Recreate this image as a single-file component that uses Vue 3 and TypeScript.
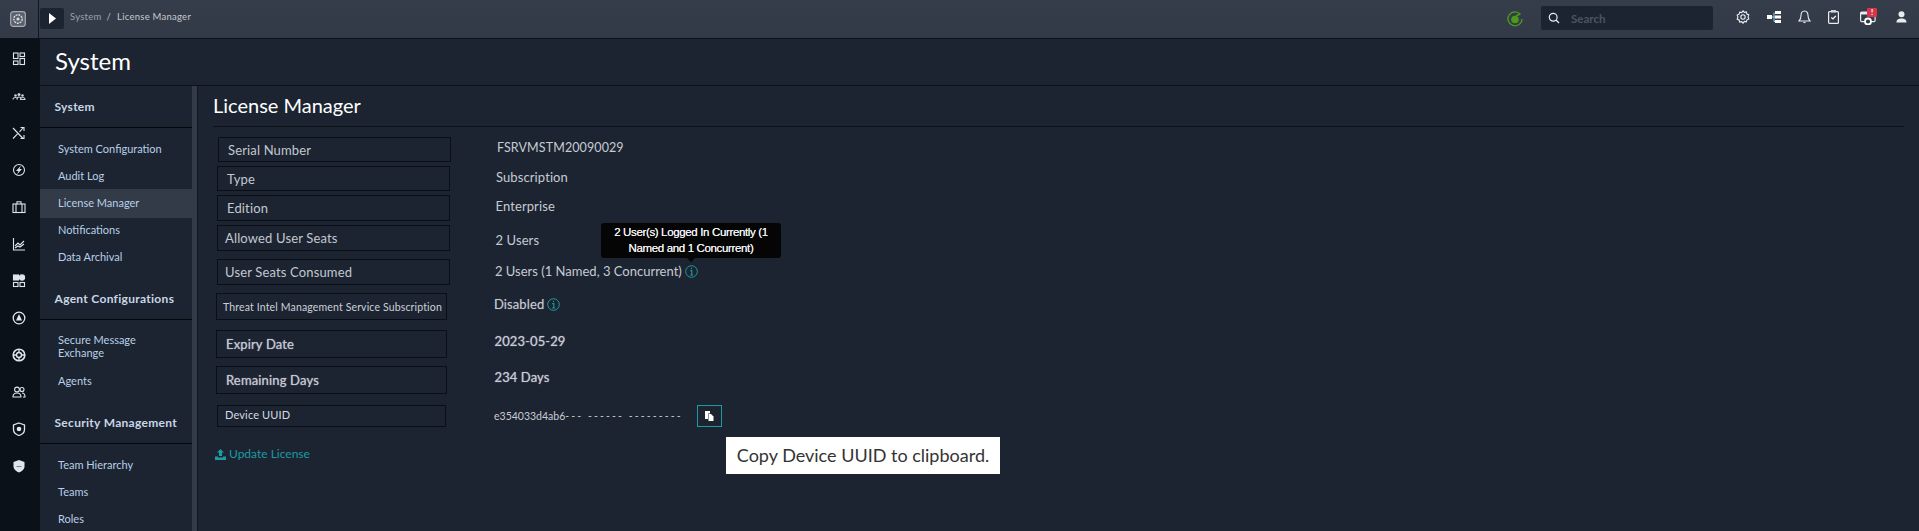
<script setup lang="ts">
interface Section { title: string; items: string[] }
interface Row { key: string; label: string; value: string; info?: boolean }

const sections: Section[] = [
  { title: 'System', items: ['System Configuration', 'Audit Log', 'License Manager', 'Notifications', 'Data Archival'] },
  { title: 'Agent Configurations', items: ['Secure Message Exchange', 'Agents'] },
  { title: 'Security Management', items: ['Team Hierarchy', 'Teams', 'Roles'] },
]

const rows: Row[] = [
  { key: 'serial', label: 'Serial Number', value: 'FSRVMSTM20090029' },
  { key: 'type', label: 'Type', value: 'Subscription' },
  { key: 'edition', label: 'Edition', value: 'Enterprise' },
  { key: 'allowed', label: 'Allowed User Seats', value: '2 Users' },
  { key: 'consumed', label: 'User Seats Consumed', value: '2 Users (1 Named, 3 Concurrent)', info: true },
  { key: 'threat', label: 'Threat Intel Management Service Subscription', value: 'Disabled', info: true },
  { key: 'expiry', label: 'Expiry Date', value: '2023-05-29' },
  { key: 'remaining', label: 'Remaining Days', value: '234 Days' },
]

const railCount = 12
</script>

<template>
  <div class="page">
    <header class="topbar">
      <div class="brand">
        <svg width="16" height="16" viewBox="0 0 16 16">
          <rect x="0.7" y="0.7" width="14.6" height="14.6" rx="2.5" fill="#59606c" stroke="#a9adb4" stroke-width="1.2" />
          <circle cx="8" cy="8" r="4.2" fill="none" stroke="#d6d9dd" stroke-width="1.4" stroke-dasharray="2 0.8" />
          <circle cx="8" cy="8" r="1.6" fill="#d6d9dd" />
        </svg>
      </div>
      <button class="toggle" type="button">
        <svg width="7" height="11" viewBox="0 0 7 11"><path d="M0 0 L7 5.5 L0 11 Z" fill="#fff" /></svg>
      </button>
      <div class="crumbs"><span class="crumb-root">System</span><span class="crumb-sep">/</span><span class="crumb-leaf">License Manager</span></div>
      <div class="tools">
        <svg class="status" width="16" height="16" viewBox="0 0 16 16">
          <path d="M13.5 3.5A7 7 0 1 0 15 8" fill="none" stroke="#4c9a1c" stroke-width="1.3" />
          <circle cx="8" cy="8.5" r="3.8" fill="#4c9a1c" />
          <path d="M9 5 L13 3" stroke="#4c9a1c" stroke-width="1.5" />
        </svg>
        <div class="search">
          <svg width="12" height="12" viewBox="0 0 12 12"><circle cx="5.2" cy="5.2" r="3.9" fill="none" stroke="#e8ebef" stroke-width="1.2" /><path d="M8 8 L11 11" stroke="#e8ebef" stroke-width="1.2" /></svg>
          <span>Search</span>
        </div>
        <div class="tool-icons">
          <svg width="14" height="14" viewBox="0 0 14 14"><path d="M7 .8l1.3 1.6 2-.4.6 2 1.9.9-.7 2 .7 2-1.9.9-.6 2-2-.4L7 13.2l-1.3-1.6-2 .4-.6-2-1.9-.9.7-2-.7-2 1.9-.9.6-2 2 .4z" fill="none" stroke="#eef1f5" stroke-width="1.1" /><circle cx="7" cy="7" r="2.2" fill="none" stroke="#eef1f5" stroke-width="1.1" /></svg>
          <svg width="14" height="12" viewBox="0 0 14 12"><rect x="0" y="4" width="5" height="4" fill="#fff" /><rect x="8" y="0" width="6" height="3" fill="#fff" /><rect x="8" y="4.5" width="6" height="3" fill="#fff" /><rect x="8" y="9" width="6" height="3" fill="#fff" /><path d="M5 6H8M7 1.5V10.5H8" stroke="#8fd0f0" fill="none" /></svg>
          <svg width="13" height="14" viewBox="0 0 13 14"><path d="M6.5 1C4 1 3 3 3 5.500C3 8 2.500 9.500 1 11H12C10.500 9.500 10 8 10 5.500C10 3 9 1 6.500 1Z" fill="none" stroke="#e8ebef" stroke-width="1.1" /><path d="M5.500 12.500H7.500" stroke="#e8ebef" stroke-width="1.2" /></svg>
          <svg width="11" height="14" viewBox="0 0 11 14"><rect x="0.600" y="1.600" width="9.800" height="11.800" rx="1" fill="none" stroke="#e8ebef" stroke-width="1.200" /><rect x="3" y="0" width="5" height="2.500" fill="#d0d4d9" /><path d="M3.300 7.500L5 9L7.800 5.800" fill="none" stroke="#fff" stroke-width="1.200" /></svg>
          <span class="jobs">
            <svg width="16" height="14" viewBox="0 0 16 14"><rect x="0.600" y="1.100" width="14.500" height="9.500" rx="1" fill="none" stroke="#e8ebef" stroke-width="1.200" /><rect x="1" y="1" width="14" height="2.500" fill="#e8ebef" /><circle cx="8" cy="10.500" r="3" fill="#333a48" stroke="#fff" stroke-width="1.800" /></svg>
            <b class="badge">!</b>
          </span>
          <svg width="11" height="12" viewBox="0 0 11 12"><circle cx="5.500" cy="3.200" r="3" fill="#e8ebef" /><path d="M0.500 11.500C0.500 8.500 2.500 8 4 7.500H7C8.500 8 10.500 8.500 10.500 11.500Z" fill="#e8ebef" /></svg>
        </div>
      </div>
    </header>

    <div class="body">
      <nav class="rail">
        <span v-for="n in railCount" :key="n" class="rail-item">
          <svg width="14" height="14" viewBox="0 0 14 14" fill="none" stroke="#dfe5ee" stroke-width="1.100">
            <template v-if="n === 1"><rect x="1.500" y="1" width="4.500" height="5.500" /><rect x="8" y="1" width="4.500" height="3.500" /><rect x="1.500" y="9" width="4.500" height="3.500" /><rect x="8" y="6.500" width="4.500" height="6" /></template>
            <template v-else-if="n === 2"><circle cx="3.500" cy="6.500" r="1.300" fill="#c9d0da" stroke="none" /><circle cx="10.500" cy="6.500" r="1.300" fill="#c9d0da" stroke="none" /><circle cx="7" cy="5.500" r="1.500" fill="#c9d0da" stroke="none" /><path d="M1 10.500C1 9 2 8.500 3.500 8.500S5.500 9 5.500 10.500M5 10.500C5 8.500 6 8 7 8S9 8.500 9 10.500M8.500 10.500C8.500 9 9.500 8.500 10.500 8.500S13 9 13 10.500Z" stroke="#c9d0da" /></template>
            <template v-else-if="n === 3"><path d="M1 2L11 12.500M1 12.500L5.500 7.800M7.500 5.800L11 2M8.500 1.500H12V5M8.500 12.500H12V9" /></template>
            <template v-else-if="n === 4"><circle cx="7" cy="7" r="5.500" /><path d="M9 2.500L4 8H6.500L5 11.500L10 6H7.500Z" fill="#dfe5ee" stroke="none" /></template>
            <template v-else-if="n === 5"><rect x="1" y="4" width="12" height="8.500" /><path d="M5 4V1.800H9V4M4 4V12.500M10 4V12.500" /></template>
            <template v-else-if="n === 6"><path d="M1.500 1V13H13M3 9L6 6L8 8L12 4M3 11L6 9L8 10L12 7" /></template>
            <template v-else-if="n === 7"><rect x="1.500" y="1" width="5" height="5" fill="#dfe5ee" /><circle cx="10" cy="3.500" r="2.600" fill="#dfe5ee" /><rect x="1.500" y="8.500" width="4.500" height="4" /><rect x="8" y="8.500" width="4.500" height="4" /></template>
            <template v-else-if="n === 8"><circle cx="7" cy="7" r="5.800" stroke-width="1.300" /><path d="M7 3L10 9.500H4Z" fill="#dfe5ee" stroke="none" /></template>
            <template v-else-if="n === 9"><circle cx="7" cy="7" r="5.800" stroke-width="1.600" /><circle cx="7" cy="7" r="2.500" stroke-width="1.400" /><path d="M7 1V4.500M7 9.500V13M1 7H4.500M9.500 7H13" stroke-width="1.300" /></template>
            <template v-else-if="n === 10"><circle cx="5" cy="4.500" r="2.400" /><circle cx="10" cy="4.500" r="2" /><path d="M1 12C1 9 3 8 5 8S9 9 9 12ZM10 8C12 8 13 9.500 13 12H11" /></template>
            <template v-else-if="n === 11"><path d="M7 1L12.500 3V7.500C12.500 10 10 12.500 7 13.500C4 12.500 1.500 10 1.500 7.500V3Z" stroke-width="1.300" /><circle cx="7" cy="7" r="2.300" fill="#dfe5ee" stroke="none" /></template>
            <template v-else><path d="M7 1L12.500 3V7.500C12.500 10 10 12.500 7 13.500C4 12.500 1.500 10 1.500 7.500V3Z" fill="#dfe5ee" stroke="none" /><path d="M4.500 7.500H9.500" stroke="#7a8a9c" /></template>
          </svg>
        </span>
      </nav>

      <div class="main">
        <div class="page-title">System</div>
        <div class="split">
          <aside class="sidebar">
            <section v-for="s in sections" :key="s.title" class="side-section">
              <h4 class="side-head">{{ s.title }}</h4>
              <ul class="side-list">
                <li v-for="item in s.items" :key="item" class="side-item" :class="{ active: item === 'License Manager', tall: item === 'Secure Message Exchange' }">
                  <span>{{ item }}</span>
                </li>
              </ul>
            </section>
          </aside>
          <div class="scrollbar"></div>
          <main class="content">
            <h2 class="content-title">License Manager</h2>
            <div class="rows">
              <div v-for="r in rows" :key="r.key" class="row" :class="`row-${r.key}`">
                <div class="label">{{ r.label }}</div>
                <div class="value">
                  <span>{{ r.value }}</span>
                  <svg v-if="r.info" class="info" width="13" height="13" viewBox="0 0 13 13" fill="none" stroke="#1e9aa2"><circle cx="6.500" cy="6.500" r="5.800" /><path d="M5.200 5.600H6.800V10M5.200 10H8.200M6.500 2.800V4" stroke-width="1.100" /></svg>
                  <div v-if="r.key === 'consumed'" class="hint">
                    2 User(s) Logged In Currently (1<br />Named and 1 Concurrent)
                  </div>
                </div>
              </div>
              <div class="row row-device">
                <div class="label">Device UUID</div>
                <div class="uuid">e354033d4ab6<span class="dashes">--- ------ ---------</span></div>
                <div class="copy-wrap">
                  <button class="copy" type="button">
                    <svg width="9" height="10" viewBox="0 0 9 10"><path d="M0 0H5V2.500H3V8H0Z" fill="#fff" /><path d="M3.500 3H6L8.500 5.500V10H3.500Z" fill="#fff" /></svg>
                  </button>
                  <div class="copy-tip">Copy Device UUID to clipboard.</div>
                </div>
              </div>
            </div>
            <a class="update">
              <svg width="11" height="11" viewBox="0 0 11 11"><path d="M5.500 0L9 3.500H7V7H4V3.500H2Z" fill="#1e9aa2" /><path d="M0 7.500H3V8.500H8V7.500H11V11H0Z" fill="#1e9aa2" /></svg>
              Update License
            </a>
          </main>
        </div>
      </div>
    </div>
  </div>
</template>

<style>
html, body { margin: 0; background: #1c2431; overflow: hidden; }
</style>

<style scoped>
.page {
  width: 1919px;
  height: 531px;
  overflow: hidden;
  display: flex;
  flex-direction: column;
  background: #1c2431;
  font-family: Lato, "Open Sans", sans-serif;
  color: #c9ced6;
}
.topbar {
  height: 39px;
  flex: none;
  display: flex;
  align-items: flex-start;
  background: linear-gradient(#353c4a, #323947);
  border-bottom: 1px solid #0d1118;
  box-sizing: border-box;
}
.brand {
  width: 39px;
  height: 38px;
  box-sizing: border-box;
  border-right: 1px solid #12161d;
  display: flex;
  align-items: center;
  justify-content: center;
  padding-right: 2px;
}
.toggle {
  width: 24px;
  height: 21px;
  margin: 8px 0 0 1px;
  padding: 0;
  border: 0;
  border-radius: 2px;
  background: #1c2431;
  display: flex;
  align-items: center;
  justify-content: center;
}
.crumbs { margin: 10px 0 0 6px; font-size: 9.500px; line-height: 14px; letter-spacing: .25px; }
.crumb-root { color: #98a2b3; }
.crumb-sep { margin: 0 6px 0 5px; color: #b8bec8; }
.crumb-leaf { color: #c5c9cf; }
.tools { margin-left: auto; display: flex; align-items: center; height: 38px; }
.status { margin-right: 18px; }
.search {
  width: 172px;
  height: 24px;
  background: #1c2431;
  border-radius: 2px;
  display: flex;
  align-items: center;
  gap: 11px;
  padding-left: 7px;
  box-sizing: border-box;
  font-size: 11.500px;
  font-weight: 700;
  color: #4d5460;
  margin-top: -2px;
}
.tool-icons {
  display: flex;
  align-items: center;
  width: 206px;
  padding-left: 23px;
  box-sizing: border-box;
  gap: 17px;
  margin-top: -4px;
}
.jobs { position: relative; display: flex; margin: 2px 3px 0 4px; }
.badge {
  position: absolute;
  left: 7px;
  top: -3px;
  width: 10px;
  height: 9px;
  background: #d8344a;
  color: #fff;
  font-size: 8px;
  line-height: 9px;
  text-align: center;
  border-radius: 1px;
}
.body { flex: 1; min-height: 0; display: flex; }
.rail { width: 40px; flex: none; background: #0b1118; display: flex; flex-direction: column; padding-top: 1.500px; box-sizing: border-box; }
.rail-item { height: 37px; flex: none; display: flex; align-items: center; justify-content: center; padding-right: 3px; }
.main { flex: 1; min-width: 0; display: flex; flex-direction: column; }
.page-title {
  height: 47px;
  flex: none;
  box-sizing: border-box;
  border-bottom: 1px solid #0d1118;
  padding: 0 0 0 15px;
  font-size: 24px;
  line-height: 44px;
  color: #fff;
}
.split { flex: 1; min-height: 0; display: flex; overflow: hidden; }
.sidebar { width: 152px; flex: none; }
.side-section { margin-bottom: 8px; }
.side-head {
  margin: 0;
  height: 42px;
  box-sizing: border-box;
  border-bottom: 1px solid #05080c;
  padding: 13px 0 0 14.500px;
  font-size: 12px;
  line-height: 16px;
  font-weight: 700;
  color: #c8d6e6;
  letter-spacing: .3px;
}
.side-list { list-style: none; margin: 0; padding: 6.500px 0 0; }
.side-item {
  height: 27px;
  box-sizing: border-box;
  padding: 7px 0 0 18px;
  font-size: 11px;
  line-height: 13px;
  color: #b9d0e8;
  letter-spacing: 0;
}
.side-item.active { height: 29px; margin-bottom: -2px; background: #333a48; position: relative; }
.side-item.tall { height: 41px; padding-right: 30px; }
.scrollbar { width: 5px; flex: none; background: #333a48; }
.content { flex: 1; min-width: 0; border-left: 1px solid #12161d; padding: 0 15px 0 15px; }
.content-title {
  margin: 0;
  height: 41px;
  box-sizing: border-box;
  border-bottom: 1px solid #0d1118;
  font-size: 20px;
  line-height: 39px;
  font-weight: 400;
  color: #fff;
}
.rows { padding-top: 10px; margin-left: 4px; }
.row { display: flex; align-items: flex-start; }
.label {
  flex: none;
  width: 233px;
  height: 100%;
  box-sizing: border-box;
  border: 1px solid #0b0f15;
  font-size: 13px;
  padding-left: 9px;
  display: flex;
  align-items: center;
  color: #c3c8d0;
  letter-spacing: .15px;
  white-space: nowrap;
}
.value { position: relative; display: flex; align-items: center; gap: 3px; margin-left: 46px; font-size: 13px; line-height: 16px; color: #c6cbd3; letter-spacing: .1px; }
.info { flex: none; }
.row-serial { height: 25px; margin-left: 1px; margin-bottom: 4px; }
.row-serial .value { margin-top: 3px; font-size: 12.500px; letter-spacing: .1px; }
.row-type { height: 25px; margin-bottom: 4px; }
.row-type .value { margin-top: 3px; }
.row-edition { height: 26px; margin-bottom: 4px; }
.row-edition .value { margin-top: 3px; margin-left: 45.500px; }
.row-allowed { height: 26px; margin-bottom: 8px; }
.row-allowed .label { padding-left: 7px; }
.row-allowed .value { margin-top: 7px; margin-left: 45.500px; }
.row-consumed { height: 26px; margin-bottom: 8px; }
.row-consumed .label { padding-left: 7px; }
.row-consumed .value { margin-top: 4px; margin-left: 45px; letter-spacing: 0; }
.row-threat { height: 27px; margin-bottom: 10px; margin-left: -1px; }
.row-threat .label { width: 231px; font-size: 10.500px; padding-left: 6px; letter-spacing: .15px; color: #ccd1d8; }
.row-threat .value { margin-top: 3px; margin-left: 47px; text-shadow: 0 0 1px #667; }
.row-expiry, .row-remaining { height: 28px; margin-left: -1px; }
.row-expiry { margin-bottom: 8px; }
.row-remaining { margin-bottom: 11px; }
.row-expiry .label, .row-remaining .label { width: 231px; padding-left: 9px; text-shadow: 0 0 1px #aab; }
.row-expiry .value, .row-remaining .value { margin-top: 3px; margin-left: 47.500px; text-shadow: 0 0 1px #aab; }
.row-device { height: 22px; }
.row-device .label { margin-left: 0; width: 229px; font-size: 11px; padding: 0 0 4px 7px; color: #d6dae0; }
.uuid { margin: 3px 0 0 48px; width: 203px; font-size: 10.500px; line-height: 16px; color: #c6cbd3; white-space: nowrap; }
.dashes { letter-spacing: 2.100px; }
.copy-wrap { position: relative; }
.copy {
  width: 25px;
  height: 22px;
  padding: 0;
  background: transparent;
  border: 1px solid #1e9aa2;
  display: flex;
  align-items: center;
  justify-content: center;
}
.copy-tip {
  position: absolute;
  left: 29px;
  top: 32px;
  width: 274px;
  height: 37px;
  background: #fff;
  color: #333;
  font-size: 18px;
  line-height: 37px;
  text-align: center;
  white-space: nowrap;
}
.hint {
  position: absolute;
  left: 106px;
  top: -40px;
  width: 180px;
  height: 35px;
  background: #050506;
  border-radius: 3px;
  color: #f0f0f0;
  font-family: "Liberation Sans", Arial, sans-serif;
  font-size: 11.500px;
  line-height: 15.500px;
  letter-spacing: -.35px;
  text-shadow: 0 0 .6px #f0f0f0;
  text-align: center;
  padding-top: 2px;
  box-sizing: border-box;
}
.hint::after {
  content: "";
  position: absolute;
  left: 86px;
  bottom: -4px;
  border: 4px solid transparent;
  border-bottom: 0;
  border-top-color: #050506;
}
.update { display: flex; align-items: center; gap: 3px; margin: 19px 0 0 2px; font-size: 12px; line-height: 16px; color: #1e9aa2; letter-spacing: 0; }
</style>
